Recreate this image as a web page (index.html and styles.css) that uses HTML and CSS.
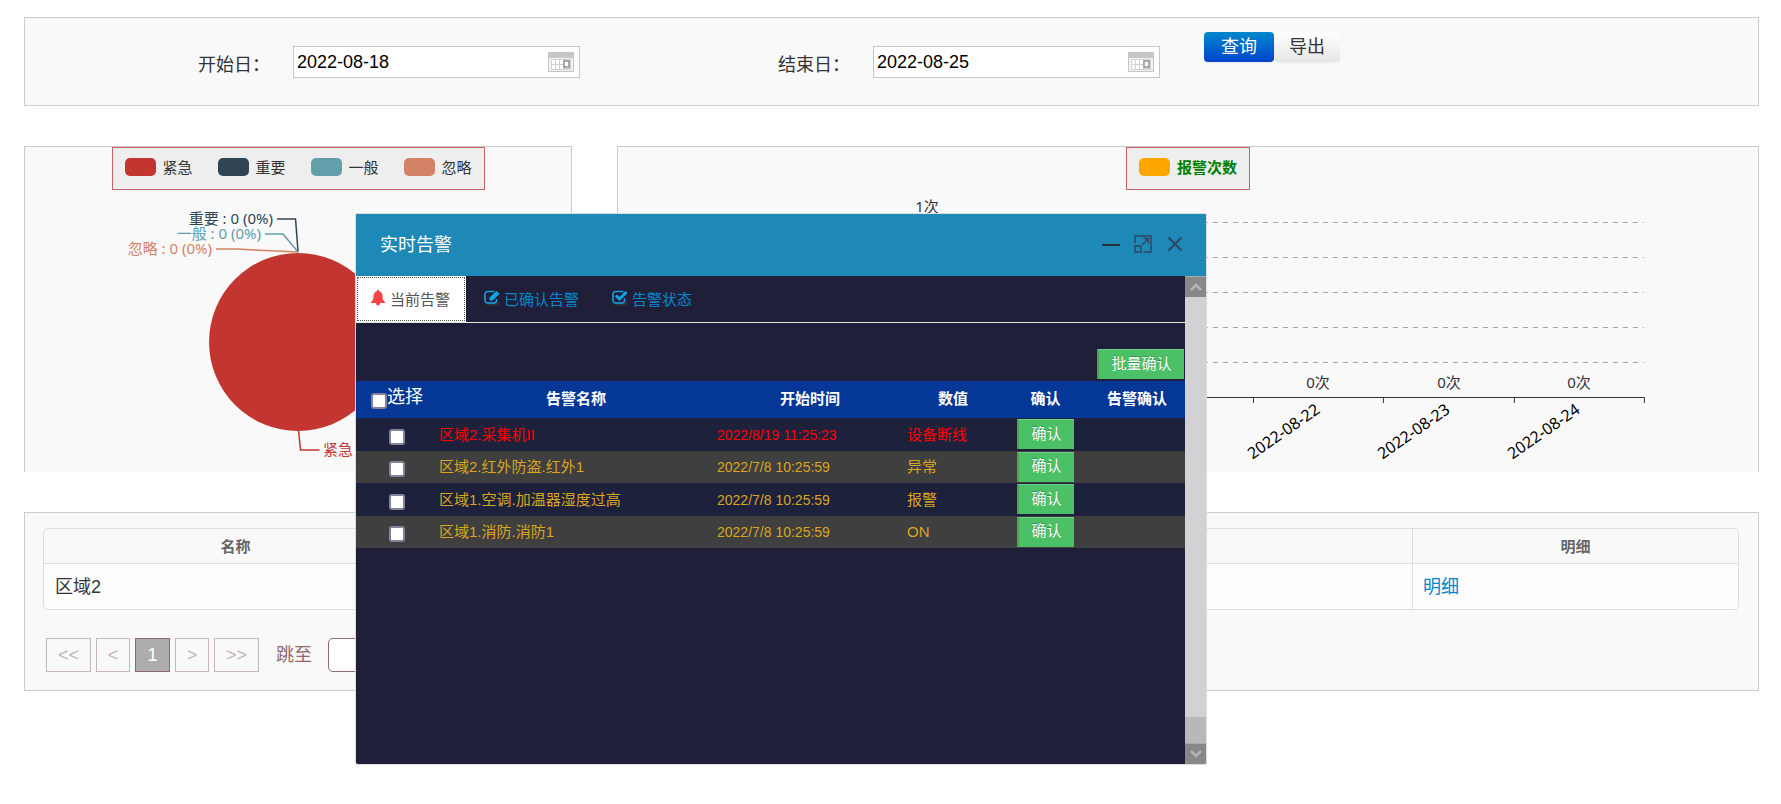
FILE: index.html
```html
<!DOCTYPE html>
<html lang="zh-CN">
<head>
<meta charset="utf-8">
<title>实时告警</title>
<link rel="stylesheet" href="styles.css">
</head>
<body>
<main class="page">
  <form class="panel search">
    <div class="field">
      <label for="start">开始日：</label>
      <span class="date-box">
        <input id="start" type="text" value="2022-08-18">
        <svg class="calendar" viewBox="0 0 26 20" aria-hidden="true"><rect width="26" height="20" fill="#c6c6c6"/><path d="M1 6h24v13H1z" fill="#f2f2f2"/><path d="M3 7h20v11H3z" fill="#d2d2d2"/><path d="M4 8h3v4H4zM8 8h3v4H8zM12 8h3v4h-3zM4 13h3v4H4zM8 13h3v4H8zM12 13h3v4h-3z" fill="#fff"/><path d="M16 9h5v6h-5z" fill="#fff" stroke="#959595" stroke-width="1.500"/></svg>
      </span>
    </div>
    <div class="field">
      <label for="end">结束日：</label>
      <span class="date-box">
        <input id="end" type="text" value="2022-08-25">
        <svg class="calendar" viewBox="0 0 26 20" aria-hidden="true"><rect width="26" height="20" fill="#c6c6c6"/><path d="M1 6h24v13H1z" fill="#f2f2f2"/><path d="M3 7h20v11H3z" fill="#d2d2d2"/><path d="M4 8h3v4H4zM8 8h3v4H8zM12 8h3v4h-3zM4 13h3v4H4zM8 13h3v4H8zM12 13h3v4h-3z" fill="#fff"/><path d="M16 9h5v6h-5z" fill="#fff" stroke="#959595" stroke-width="1.500"/></svg>
      </span>
    </div>
    <div class="actions">
      <button type="button" class="btn btn-primary">查询</button><button type="button" class="btn">导出</button>
    </div>
  </form>

  <div class="charts">
    <section class="panel chart">
      <ul class="legend">
        <li><i class="swatch red"></i>紧急</li>
        <li><i class="swatch navy"></i>重要</li>
        <li><i class="swatch teal"></i>一般</li>
        <li><i class="swatch coral"></i>忽略</li>
      </ul>
      <svg class="plot" viewBox="0 0 546 282">
        <circle cx="273" cy="152" r="89" fill="#c23531"/>
        <g fill="none" stroke-width="1.500">
          <path d="M252 29h18.500L273 62" stroke="#2f4554"/>
          <path d="M240 44h18L273 62" stroke="#61a0a8"/>
          <path d="M191 59h20L273 62" stroke="#d48265"/>
          <path d="M273.500 241l2 19h19" stroke="#c23531"/>
        </g>
        <text x="248" y="34" text-anchor="end" fill="#2f4554">重要 : 0 (0%)</text>
        <text x="236" y="49" text-anchor="end" fill="#61a0a8">一般 : 0 (0%)</text>
        <text x="187" y="64" text-anchor="end" fill="#d48265">忽略 : 0 (0%)</text>
        <text x="298" y="265" fill="#c23531">紧急 : 1 (100%)</text>
      </svg>
    </section>
    <section class="panel chart">
      <ul class="legend">
        <li class="strong"><i class="swatch orange"></i>报警次数</li>
      </ul>
      <svg class="plot" viewBox="0 0 1140 282">
        <g stroke="#b39c9c" stroke-dasharray="5 5">
          <path d="M115 32.500H1026"/><path d="M115 67.500H1026"/><path d="M115 102.500H1026"/><path d="M115 137.500H1026"/><path d="M115 172.500H1026"/>
        </g>
        <rect x="277" y="32" width="66" height="175" fill="#ffa500"/>
        <path d="M115 207.500H1026.500V213M896.500 207v6M765.500 207v6M635.500 207v6" fill="none" stroke="#333"/>
        <g text-anchor="middle" fill="#333">
          <text x="309" y="22">1次</text>
          <text x="700" y="198">0次</text>
          <text x="831" y="198">0次</text>
          <text x="961" y="198">0次</text>
        </g>
        <g class="dates" text-anchor="end" fill="#000">
          <text transform="translate(703 222) rotate(-35)">2022-08-22</text>
          <text transform="translate(833 222) rotate(-35)">2022-08-23</text>
          <text transform="translate(963 222) rotate(-35)">2022-08-24</text>
        </g>
      </svg>
    </section>
  </div>

  <section class="panel results">
    <table class="list">
      <colgroup><col class="c-name"><col><col class="c-detail"></colgroup>
      <thead><tr><th>名称</th><th></th><th>明细</th></tr></thead>
      <tbody><tr><td>区域2</td><td></td><td><a href="#">明细</a></td></tr></tbody>
    </table>
    <nav class="pager">
      <button type="button" class="double" disabled>&lt;&lt;</button>
      <button type="button" disabled>&lt;</button>
      <button type="button" class="current">1</button>
      <button type="button" disabled>&gt;</button>
      <button type="button" class="double" disabled>&gt;&gt;</button>
      <label for="jump">跳至</label>
      <input id="jump" type="text">
    </nav>
  </section>
</main>

<div class="dialog" role="dialog" aria-labelledby="dialog-title">
  <header class="dialog-head">
    <h1 id="dialog-title">实时告警</h1>
    <button type="button" aria-label="最小化"><svg viewBox="0 0 18 18"><path d="M0 10h18" stroke="#2e2d3c" stroke-width="2"/></svg></button>
    <button type="button" aria-label="最大化"><svg viewBox="0 0 18 18"><path d="M1 8.500V1h16v16H9.500M1 11h6v6H1zM8.500 9.500l6-6M9.500 3.500h5v5" fill="none" stroke="#2d4660" stroke-width="1.400"/><path d="M11 3.500h4v4z" fill="#2d4660"/></svg></button>
    <button type="button" aria-label="关闭"><svg viewBox="0 0 18 18"><path d="M2.500 2.500l13 13M15.500 2.500l-13 13" stroke="#2d4660" stroke-width="2"/></svg></button>
  </header>
  <div class="dialog-body">
    <div class="content">
      <nav class="tabs">
        <a href="#" class="tab active"><svg viewBox="0 0 16 16"><path d="M8 0c.8 0 1.200.5 1.200 1.200C11.500 1.800 12.500 3.500 12.500 6c0 3.500 1 5 2.800 6.500V13H.7v-.5C2.500 11 3.500 9.500 3.500 6c0-2.500 1-4.200 3.300-4.800C6.800.5 7.200 0 8 0zM6 13h4c0 1.500-.8 2.500-2 2.500S6 14.500 6 13z" fill="#f84444"/></svg>当前告警</a>
        <a href="#" class="tab"><svg viewBox="0 0 16 16"><path d="M2 12h13v3.500H3z" fill="#303038"/><path d="M10.500 1.500H3.500A2.500 2.500 0 0 0 1 4v6.500A2.500 2.500 0 0 0 3.500 13H10a2.500 2.500 0 0 0 2.500-2.500V9" fill="none" stroke="#12a5e8" stroke-width="1.500"/><path d="M5.500 10.500V7.500l7-6.500L15.500 4l-7 6.500z" fill="#12a5e8"/></svg>已确认告警</a>
        <a href="#" class="tab"><svg viewBox="0 0 16 16"><path d="M2 12h13v3.500H3z" fill="#303038"/><path d="M11.500 1.500H3.500A2.500 2.500 0 0 0 1 4v6.500A2.500 2.500 0 0 0 3.500 13H10a2.500 2.500 0 0 0 2.500-2.500V8.500" fill="none" stroke="#12a5e8" stroke-width="1.500"/><path d="M4 5.500l3.500 3.500L14.500 2" fill="none" stroke="#12a5e8" stroke-width="3"/></svg>告警状态</a>
      </nav>
      <div class="toolbar"><button type="button" class="confirm wide">批量确认</button></div>
      <table class="alarms">
        <colgroup><col class="a-check"><col class="a-name"><col class="a-time"><col class="a-value"><col class="a-ok"><col></colgroup>
        <thead>
          <tr><th class="pick"><label><input type="checkbox">选择</label></th><th>告警名称</th><th>开始时间</th><th>数值</th><th>确认</th><th>告警确认</th></tr>
        </thead>
        <tbody>
          <tr class="urgent"><td class="check"><input type="checkbox" aria-label="区域2.采集机II"></td><td>区域2.采集机II</td><td class="time">2022/8/19 11:25:23</td><td>设备断线</td><td class="act"><button type="button" class="confirm">确认</button></td><td></td></tr>
          <tr><td class="check"><input type="checkbox" aria-label="区域2.红外防盗.红外1"></td><td>区域2.红外防盗.红外1</td><td class="time">2022/7/8 10:25:59</td><td>异常</td><td class="act"><button type="button" class="confirm">确认</button></td><td></td></tr>
          <tr><td class="check"><input type="checkbox" aria-label="区域1.空调.加温器湿度过高"></td><td>区域1.空调.加温器湿度过高</td><td class="time">2022/7/8 10:25:59</td><td>报警</td><td class="act"><button type="button" class="confirm">确认</button></td><td></td></tr>
          <tr><td class="check"><input type="checkbox" aria-label="区域1.消防.消防1"></td><td>区域1.消防.消防1</td><td class="time">2022/7/8 10:25:59</td><td>ON</td><td class="act"><button type="button" class="confirm">确认</button></td><td></td></tr>
        </tbody>
      </table>
    </div>
    <div class="scroll" aria-hidden="true">
      <span class="arrow"><svg viewBox="0 0 12 8"><path d="M1 7l5-5 5 5" fill="none" stroke="#b4b4b4" stroke-width="2.500"/></svg></span>
      <span class="thumb"></span>
      <span class="arrow"><svg viewBox="0 0 12 8"><path d="M1 1l5 5 5-5" fill="none" stroke="#b4b4b4" stroke-width="2.500"/></svg></span>
    </div>
  </div>
</div>
</body>
</html>
```

FILE: styles.css
```css
* { box-sizing: border-box; }

body {
  margin: 0;
  background: #fff;
  color: #333;
  font: 18px/24px "Liberation Sans", "Noto Sans CJK SC", sans-serif;
}

button, input { font: inherit; margin: 0; }

.page {
  display: flex;
  flex-direction: column;
  gap: 40px;
  padding: 17px 22px 40px 24px;
}

.panel {
  background: #f9f9f9;
  border: 1px solid #ccc;
}

/* search bar */
.search {
  display: grid;
  grid-template-columns: 580fr 578fr 575fr;
  padding: 14px 0 27px;
}

.field {
  display: flex;
  align-items: center;
  padding: 14px 0 0 173px;
}

.field label { flex: 0 0 95px; padding-top: 6px; }

.date-box {
  display: flex;
  align-items: center;
  width: 287px;
  height: 32px;
  padding: 0 5px 0 3px;
  background: #fff;
  border: 1px solid #c6c6c6;
}

.date-box input {
  flex: 1;
  min-width: 0;
  padding: 0;
  border: 0;
  outline: 0;
  background: none;
  color: #000;
}

.calendar { width: 26px; height: 20px; }

.actions { display: flex; align-items: flex-start; padding-left: 21px; }

.btn {
  height: 30px;
  padding: 0 15px;
  border: 0;
  border-radius: 4px;
  background: linear-gradient(#fff, #e6e6e6);
  box-shadow: 0 1px 2px rgba(0, 0, 0, .06);
  color: #333;
  line-height: 28px;
}

.btn-primary {
  width: 70px;
  background: linear-gradient(#08c, #04c);
  color: #fff;
}

/* charts */
.charts {
  display: grid;
  grid-template-columns: 12fr 25fr;
  gap: 45px;
}

.chart {
  display: flex;
  flex-direction: column;
  align-items: center;
  border-bottom: 0;
}

.legend {
  display: flex;
  gap: 25px;
  height: 43px;
  margin: 0;
  padding: 0 12px 4px;
  list-style: none;
  background: #eee;
  border: 1px solid #c56464;
  font: 15px/36px "Noto Sans", "Noto Sans CJK SC", sans-serif;
}

.legend li { display: flex; align-items: center; gap: 7px; }
.legend .strong { color: #008000; font-weight: 700; }

.swatch { width: 31px; height: 18px; border-radius: 5px; }
.red { background: #c23531; }
.navy { background: #2f4554; }
.teal { background: #61a0a8; }
.coral { background: #d48265; }
.orange { background: #ffa500; }

.plot {
  display: block;
  width: 100%;
  font: 15px "Noto Sans", "Noto Sans CJK SC", sans-serif;
}

.dates { font-size: 16px; }

/* result list */
.results { padding: 15px 19px 18px 18px; }

.list {
  width: 100%;
  table-layout: fixed;
  border-collapse: separate;
  border-spacing: 0;
  border: 1px solid #ddd;
  border-radius: 5px;
}

.c-name { width: 383px; }
.c-detail { width: 326px; }

.list th {
  height: 34px;
  padding: 2px 0 0;
  color: #666;
  font-size: 15px;
  line-height: 20px;
}

.list td {
  height: 46px;
  padding: 0 11px;
  background: #fdfdfd;
  border-top: 1px solid #ddd;
}

.list th + th, .list td + td { border-left: 1px solid #ddd; }
.list td + td { padding-left: 10px; }
.list td:first-child { border-bottom-left-radius: 5px; }
.list td:last-child { border-bottom-right-radius: 5px; }
.list a { color: #08c; text-decoration: none; }

.pager {
  display: flex;
  align-items: center;
  gap: 5px;
  padding: 28px 3px 0;
  color: #8f6b6b;
}

.pager button {
  width: 34px;
  height: 34px;
  padding: 0;
  border: 1px solid #c5b5b5;
  background: #f9f9f9;
  color: #c5b5b5;
  line-height: 30px;
}

.pager .double { width: 45px; }
.pager .current { width: 35px; background: #adadad; border-color: #8f6b6b; color: #fff; }
.pager label { padding: 0 11px 0 12px; }
.pager input { width: 60px; height: 34px; border: 1px solid #8f6b6b; border-radius: 5px; background: #fff; }

/* floating alarm window */
.dialog {
  position: absolute;
  top: 213px;
  left: 355px;
  width: 852px;
  border: 1px solid #dcdcdc;
  border-radius: 3px;
  overflow: hidden;
  background: #201f3a;
}

.dialog-head {
  display: flex;
  align-items: center;
  gap: 14px;
  height: 62px;
  padding: 0 22px 0 24px;
  background: #1e88b6;
}

.dialog-head h1 { flex: 1; margin: 0; color: #fff; font-size: 18px; font-weight: 400; }
.dialog-head button { display: flex; padding: 0 0 2px; border: 0; background: none; }
.dialog-head svg { width: 18px; height: 18px; }

.dialog-body { display: flex; height: 488px; }
.content { flex: 1; min-width: 0; font-size: 15px; line-height: 20px; }

.tabs { display: flex; height: 47px; border-bottom: 1px solid #ddeedd; }

.tab {
  display: flex;
  align-items: center;
  gap: 4px;
  padding: 2px 15px 0 18px;
  color: #08c;
  text-decoration: none;
}

.tab svg { width: 16px; height: 16px; margin-bottom: 4px; }

.tab.active {
  padding: 2px 16px 0 14px;
  background: #fff;
  color: #555;
  outline: 1px dotted #555;
  outline-offset: -2px;
}

.toolbar { display: flex; justify-content: flex-end; padding: 26px 1px 2px; }

.confirm {
  height: 30px;
  width: 57px;
  padding: 0 0 2px;
  border: 0;
  border-top: 1px solid #6fce86;
  border-left: 2px solid #4ca352;
  background: #4bc067;
  color: #fff;
  font-size: 15px;
  line-height: 24px;
  text-shadow: 0 -1px 0 rgba(0, 0, 0, .25);
}

.confirm.wide { width: 87px; }

.alarms { width: 100%; table-layout: fixed; border-collapse: collapse; color: #daa520; }
.a-check { width: 80px; }
.a-name { width: 280px; }
.a-time { width: 188px; }
.a-value { width: 98px; }
.a-ok { width: 87px; }

.alarms th { height: 37px; padding: 0 0 2px; background: #043796; color: #fff; }
.alarms td { height: 33px; padding: 0 0 0 3px; background: #1e213b; }
.alarms tr:nth-child(even) td { height: 32px; background: #3f3f3f; }
.alarms .urgent { color: #f00; }
.alarms .time { padding-left: 1px; font-size: 14px; }
.alarms .act { padding: 0 0 1px; text-align: center; }
.alarms .check { padding: 4px 0 0 1px; text-align: center; }
.alarms .confirm { display: block; margin: 0 auto; }

.alarms .pick label {
  display: flex;
  align-items: center;
  padding: 0 0 4px 15px;
  font-size: 18px;
  font-weight: 400;
}

.alarms input {
  display: block;
  width: 16px;
  height: 16px;
  margin: 0 auto;
  appearance: none;
  background: #fff;
  border: 2px solid #85839a;
  border-radius: 3px;
}

.alarms .pick input { margin: 8px 0 0; }

.scroll { display: flex; flex-direction: column; width: 21px; background: #d2d2d4; }

.arrow {
  display: flex;
  align-items: center;
  justify-content: center;
  height: 21px;
  background: #888;
  border-top: 1px solid #aaa;
}

.arrow svg { width: 12px; height: 8px; }
.thumb { height: 26px; margin-top: auto; background: #b8b8ba; }
```
